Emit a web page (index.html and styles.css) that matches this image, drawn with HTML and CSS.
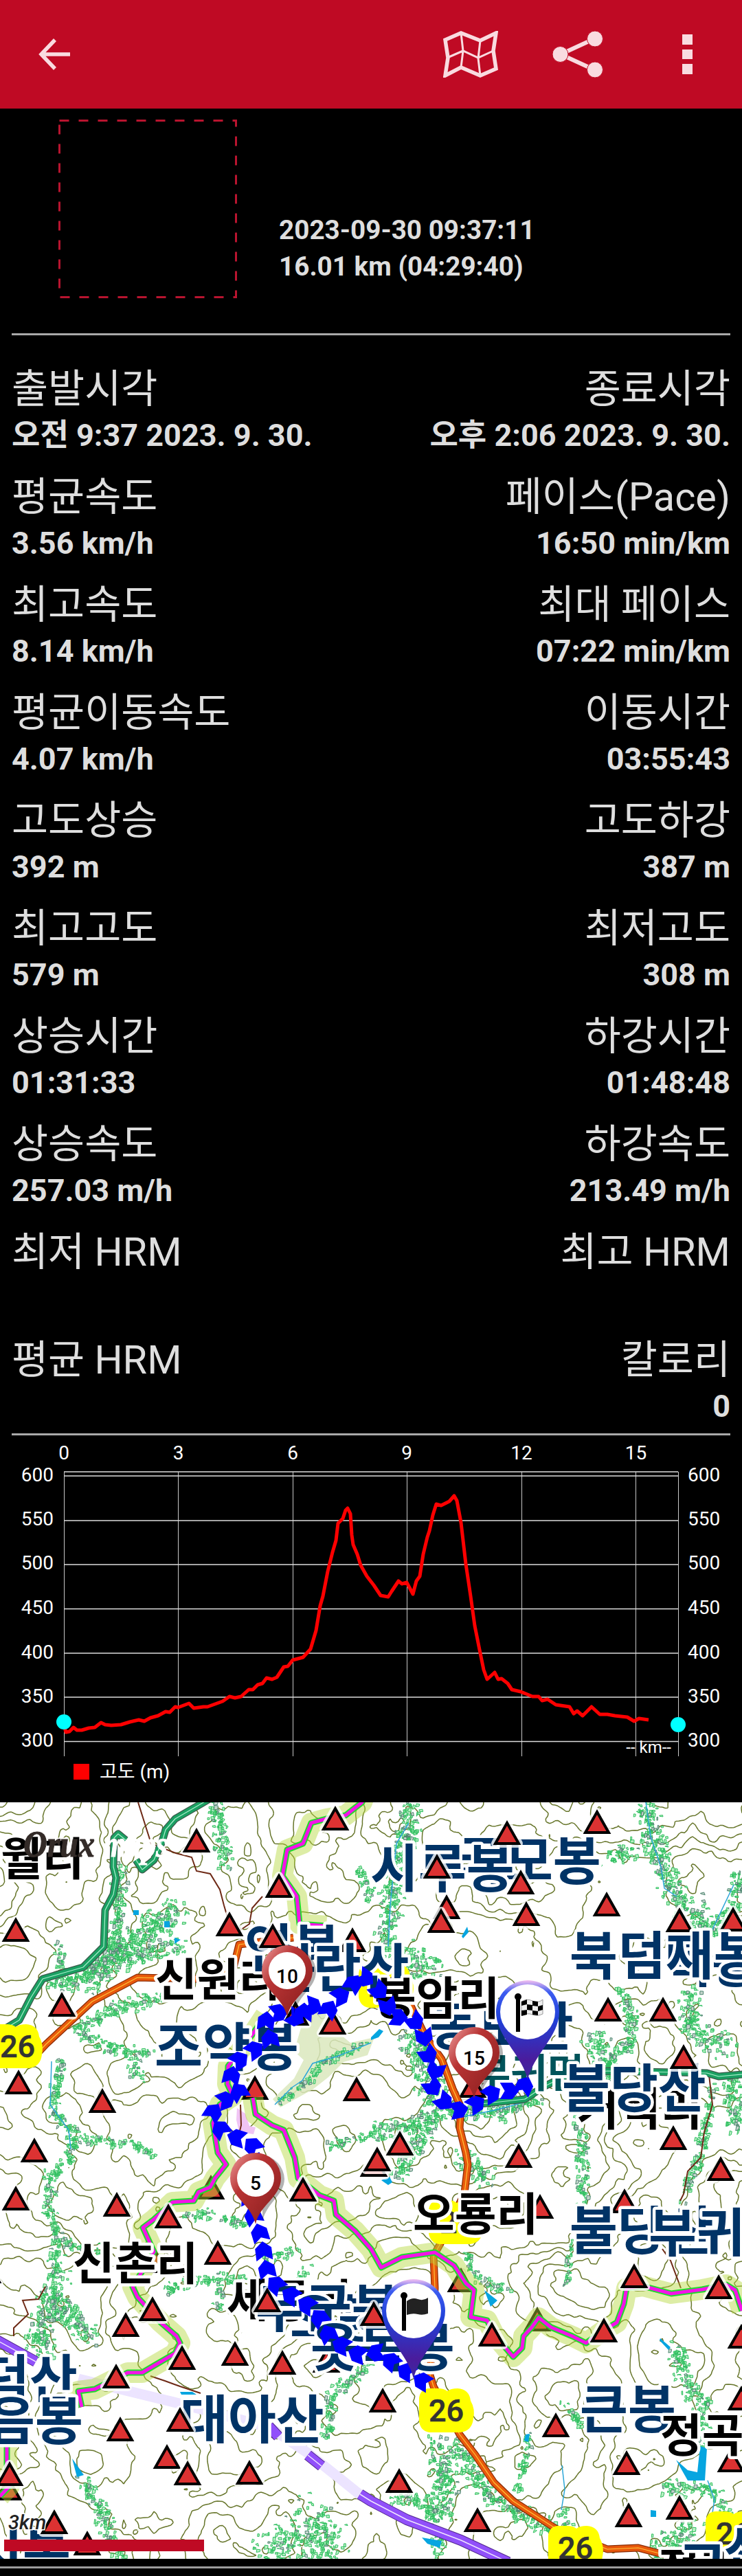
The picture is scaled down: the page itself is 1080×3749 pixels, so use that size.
FILE: index.html
```html
<!DOCTYPE html>
<html lang="ko">
<head>
    <meta charset="UTF-8">
    <meta name="viewport" content="width=device-width, initial-scale=1.0">
    <title>OruxMaps</title>
    <link rel="stylesheet" href="styles.css">
</head>
<body>
    <!-- Top bar -->
    <header class="toolbar">
        <svg class="icon back" viewBox="0 0 48 48"><path d="M46 24H5M24 3L4 24l20 21"/></svg>
        <svg class="icon map-icon" viewBox="0 0 80 68"><path class="thick" d="M3 13L26 3l28 11L77 3l-4 26 4 26-23 10-28-12L3 65l4-26z"/><path class="thin" d="M26 3l3 26-3 24M54 14l-3 26 3 25M6 39l23-10 22 10 22-10"/></svg>
        <svg class="icon share" viewBox="0 0 74 68"><path d="M12 34L62 11M12 34l50 23"/><circle cx="11.500" cy="34" r="11.500"/><circle cx="62" cy="11.500" r="11.500"/><circle cx="62" cy="56.500" r="11.500"/></svg>
        <div class="more"><i></i><i></i><i></i></div>
    </header>

    <!-- Track title -->
    <section class="summary">
        <svg class="photo" viewBox="0 0 260 260"><rect x="1.500" y="1.500" width="257" height="257"/></svg>
        <div class="summary-text">
            <div>2023-09-30 09:37:11</div>
            <div>16.01 km (04:29:40)</div>
        </div>
    </section>

    <!-- Statistics -->
    <section class="stats">
        <div class="stat"><label>출발시각</label><b>오전 9:37 2023. 9. 30.</b></div>
        <div class="stat"><label>종료시각</label><b>오후 2:06 2023. 9. 30.</b></div>
        <div class="stat"><label>평균속도</label><b>3.56 km/h</b></div>
        <div class="stat"><label>페이스(Pace)</label><b>16:50 min/km</b></div>
        <div class="stat"><label>최고속도</label><b>8.14 km/h</b></div>
        <div class="stat"><label>최대 페이스</label><b>07:22 min/km</b></div>
        <div class="stat"><label>평균이동속도</label><b>4.07 km/h</b></div>
        <div class="stat"><label>이동시간</label><b>03:55:43</b></div>
        <div class="stat"><label>고도상승</label><b>392 m</b></div>
        <div class="stat"><label>고도하강</label><b>387 m</b></div>
        <div class="stat"><label>최고고도</label><b>579 m</b></div>
        <div class="stat"><label>최저고도</label><b>308 m</b></div>
        <div class="stat"><label>상승시간</label><b>01:31:33</b></div>
        <div class="stat"><label>하강시간</label><b>01:48:48</b></div>
        <div class="stat"><label>상승속도</label><b>257.03 m/h</b></div>
        <div class="stat"><label>하강속도</label><b>213.49 m/h</b></div>
        <div class="stat"><label>최저 HRM</label><b></b></div>
        <div class="stat"><label>최고 HRM</label><b></b></div>
        <div class="stat"><label>평균 HRM</label><b></b></div>
        <div class="stat"><label>칼로리</label><b>0</b></div>
    </section>

    <!-- Altitude chart -->
    <svg class="chart" viewBox="0 0 1080 534">
        <path class="grid-v" d="M93.500 53V467M259.500 53V467M426.500 53V467M592.500 53V467M759.500 53V467M925.500 53V467M987.500 53V467"/>
        <path class="grid-h" d="M93 53H987M93 59H987M93 124H987M93 188H987M93 252.500H987M93 317H987M93 381H987M93 445.500H987"/>
        <g class="axis mid">
            <text x="93" y="35">0</text><text x="259.500" y="35">3</text><text x="426" y="35">6</text>
            <text x="592" y="35">9</text><text x="759" y="35">12</text><text x="925.500" y="35">15</text>
        </g>
        <g class="axis end">
            <text x="78" y="67">600</text><text x="78" y="131">550</text><text x="78" y="195">500</text><text x="78" y="260">450</text>
            <text x="78" y="325">400</text><text x="78" y="389">350</text><text x="78" y="453">300</text>
            <text class="unit" x="977" y="462">-- km--</text>
        </g>
        <g class="axis">
            <text x="1001" y="67">600</text><text x="1001" y="131">550</text><text x="1001" y="195">500</text><text x="1001" y="260">450</text>
            <text x="1001" y="325">400</text><text x="1001" y="389">350</text><text x="1001" y="453">300</text>
        </g>
        <polyline class="altitude" points="94,425 96,432 101,431 107,425 112,429 119,429 129,426 138,425 147,418 153,421 162,422 176,421 189,417 202,414 210,416 219,411 230,408 241,402 247,403 255,395 259,396 275,390 282,397 296,395 302,395 313,391 324,387 334,380 342,382 351,380 362,370 368,370 375,363 382,361 388,353 396,355 403,352 413,337 419,336 426,327 441,323 452,311 460,284 466,248 470,234 477,198 484,170 489,153 492,128 499,121 503,109 506,106 510,114 512,145 514,159 520,173 525,189 534,205 544,218 554,233 565,235 570,227 580,212 585,216 592,214 601,231 606,212 611,205 616,173 622,148 625,139 630,116 635,100 642,102 654,96 661,88 665,95 671,127 678,187 685,234 691,277 698,312 704,341 709,355 720,345 725,355 730,354 739,361 745,370 758,373 775,380 784,380 789,386 797,384 809,392 829,395 835,405 840,401 848,408 861,395 873,406 884,406 895,408 913,410 923,416 930,412 944,414"/>
        <circle class="handle" cx="93" cy="417" r="11"/>
        <circle class="handle" cx="987" cy="421" r="11"/>
        <rect class="legend" x="107" y="478" width="23" height="23"/>
        <text class="axis" x="145" y="499">고도 (m)</text>
    </svg>

    <!-- Map -->
    <svg class="map" viewBox="0 0 1080 1101">
        <defs>
            <path id="peak" d="M0 3L17 33H-17z"/>
            <path id="chevron" d="M0-14L12-4V14L0 7-12 14V-4z"/>
            <path id="badge" d="M0 14Q2 0 15 0H28Q36 0 41 4 46 0 56 0 73 1 75 18 82 30 79 44 77 62 60 64H15Q2 62 0 48z"/>
            <linearGradient id="redPin" x1="0" x2="1" y1="0" y2="1"><stop offset="0" stop-color="#f0a0a0"/><stop offset=".35" stop-color="#b83434"/><stop offset="1" stop-color="#861c1c"/></linearGradient>
            <linearGradient id="bluePin" x1="0" x2="0" y1="0" y2="1"><stop offset="0" stop-color="#f4c0f0"/><stop offset=".12" stop-color="#3c5cf0"/><stop offset=".4" stop-color="#2040d8"/><stop offset=".8" stop-color="#4a1c9c"/><stop offset="1" stop-color="#3c2aa0"/></linearGradient>
            <g id="kmPin"><path class="shadow" d="M6 3A37 37 0 0 1 38 38C38 62 12 72 6 100z" transform="translate(4 -37)"/><path fill="url(#redPin)" d="M0 67C-6 38-37 28-37 0a37 37 0 0 1 74 0C37 28 6 38 0 67z"/><circle r="27" fill="#fff"/></g>
            <g id="flagPin"><path fill="url(#bluePin)" d="M0 99C-8 62-46 36-46 0a46 46 0 0 1 92 0C46 36 8 62 0 99z"/><circle r="40" fill="#fff"/><circle cx="-14" cy="-22" r="5"/><path d="M-17-22h6v51h-6z"/></g>
        </defs>
        <g id="contours" class="contour"></g>
        <path class="park" d="M445 305L468 297 486 330 510 350 545 342 535 368 500 378 478 400 455 418 408 444 397 432 428 402 442 375 428 362z"/>
        <path class="pink" d="M345 445l12 8 6 18 9 2-3 10-21-3-4-18z"/>
        <g id="fields"></g>
        <g class="lake">
            <path d="M984 957L1001 987 1026 987 1029 940 1019 937 1015 975 1001 972z"/>
            <path d="M105 955L122 979 112 982zM705 710L724 725 714 734zM614 1070L643 1075 640 1085 622 1079z"/>
            <path d="M194 157h8v7h-8zM239 173h8v9h-8zM254 197l9 3-9 6zM672 195l8-14 2 8-8 9zM765 920l6-1-2 12-6-2zM555 550l12-5 4 8-6 4zM961 780l15 13-3 4-13-14zM947 1030l8 1v9h-8zM262 858l18 0 6 4-22 0zM540 342l12-12 6 3-7 9-11 4z"/>
        </g>
        <g class="stream">
            <path d="M940 0L947 50 962 94 967 125 985 137M1036 187L1068 120M663 460L720 448 765 436 780 420M565 210L568 150 577 60 595 30M75 377L73 440 100 477 103 505M818 965L822 1000 817 1030M1030 987L1040 1015 1036 1040M400 440L425 415 440 405 455 380 490 370 540 350"/>
        </g>
        <g class="trail">
            <path d="M201 0L212 35 220 60 256 74 279 80 286 100 306 104 320 127 326 150 334 177 344 190 363 177 367 154 382 137"/>
            <path d="M1032 397L1037 440 1025 480 1020 517 1001 537 995 570 990 580M964 650L976 667 991 707M66 705L56 723 33 725 41 745 20 765V777M219 835L240 842 262 850 292 860M350 440L351 470 345 495"/>
        </g>
        <g id="lowPeaks" class="peak"></g>

        <!-- Roads -->
        <path class="tunnel" d="M114 839L269 877 393 910 448 947 527 1010"/>
        <g class="road purple">
            <path d="M-10 780L52 814M391 908l14 15M448 950L468 966M524 1007L540 1017 592 1044 671 1074 740 1106"/>
            <path d="M-10 780L52 814M391 908l14 15M448 950L468 966M524 1007L540 1017 592 1044 671 1074 740 1106"/>
            <path d="M-10 780L52 814M448 950L468 966M524 1007L540 1017 592 1044 671 1074 740 1106"/>
        </g>
        <g class="road green">
            <path d="M310-8L293 2 255 24 241 40 236 57 224 84 207 98 198 84M183 55L172 46 166 52 165 94 169 110 165 134 153 157 151 210 121 240 62 257 45 284 28 317 5 331M690 440L764 432 791 414 826 397 884 391 1029 394 1046 399 1090 395"/>
            <path d="M310-8L293 2 255 24 241 40 236 57 224 84 207 98 198 84M183 55L172 46 166 52 165 94 169 110 165 134 153 157 151 210 121 240 62 257 45 284 28 317 5 331M690 440L764 432 791 414 826 397 884 391 1029 394 1046 399 1090 395"/>
            <path d="M310-8L293 2 255 24 241 40 236 57 224 84 207 98 198 84M183 55L172 46 166 52 165 94 169 110 165 134 153 157 151 210 121 240 62 257 45 284 28 317 5 331M690 440L764 432 791 414 826 397 884 391 1029 394 1046 399 1090 395"/>
        </g>
        <g class="road orange">
            <path d="M50 370L67 352 134 290 200 255 286 257 339 244 348 207 427 197M597 294L619 340 643 374 659 417 671 444 669 474 678 510 681 527 676 569 640 644 631 660 633 707 626 834 631 850 669 920 692 950 719 990 747 1017 809 1057 884 1087 929 1085 967 1095"/>
            <path d="M50 370L67 352 134 290 200 255 286 257 339 244 348 207 427 197M597 294L619 340 643 374 659 417 671 444 669 474 678 510 681 527 676 569 640 644 631 660 633 707 626 834 631 850 669 920 692 950 719 990 747 1017 809 1057 884 1087 929 1085 967 1095"/>
            <path d="M50 370L67 352 134 290 200 255 286 257 339 244 348 207 427 197M597 294L619 340 643 374 659 417 671 444 669 474 678 510 681 527 676 569 640 644 631 660 633 707 626 834 631 850 669 920 692 950 719 990 747 1017 809 1057 884 1087 929 1085 967 1095"/>
        </g>
        <g id="ridges" class="ridge"></g>

        <g class="badge">
            <use href="#badge" x="-18" y="323"/><text x="0" y="371">26</text>
            <use href="#badge" x="610" y="853"/><text x="624" y="901">26</text>
            <use href="#badge" x="798" y="1053"/><text x="812" y="1101">26</text>
            <use href="#badge" x="1027" y="1032"/><text x="1042" y="1080">26</text>
            <use href="#badge" x="624" y="579"/><text x="640" y="627">26</text>
            <use href="#badge" x="522" y="235"/><text x="536" y="283">26</text>
        </g>

        <!-- Place names -->
        <g class="place village">
            <text x="1" y="106">월리</text>
            <text x="226" y="282">신원리</text>
            <text x="545" y="309">봉암리</text>
            <text x="840" y="470">거석리</text>
            <text x="601" y="623">오룡리</text>
            <text x="106" y="695">신촌리</text>
            <text x="330" y="749">세동리</text>
            <text x="958" y="1140">정리</text>
        </g>
        <g class="place">
            <text class="town" x="690" y="415">부귀면</text>
            <text x="665" y="113">국모봉</text>
            <text x="539" y="124">시루봉</text>
            <text x="966" y="262">덕봉</text>
            <text x="829" y="251">북덤재봉</text>
            <text x="356" y="240">연봉</text>
            <text x="386" y="269">월란산</text>
            <text x="225" y="384">조약봉</text>
            <text x="625" y="354">동보산</text>
            <text x="818" y="444">불당산</text>
            <text x="829" y="651">불당산</text>
            <text x="944" y="654">부귀산</text>
            <text x="422" y="778">오봉</text>
            <text x="372" y="764">두군봉</text>
            <text x="452" y="821">옷목봉</text>
            <text x="-27" y="867">덕산</text>
            <text x="-19" y="928">음봉</text>
            <text x="262" y="926">대아산</text>
            <text x="844" y="911">큰봉</text>
            <text x="-37" y="1121">시봉</text>
            <text x="987" y="1138">고산</text>
            <text x="1054" y="1116">산</text>
        </g>
        <g class="place village">
            <text x="545" y="309">봉암리</text>
            <text x="961" y="945">정곡리</text>
        </g>
        <g id="peaks" class="peak"></g>
        <g id="track" class="track"></g>

        <!-- Pins -->
        <use href="#kmPin" x="418" y="245"/><text class="km" x="418" y="263">10</text>
        <use href="#kmPin" x="690" y="364"/><text class="km" x="690" y="382">15</text>
        <use href="#kmPin" x="372" y="547"/><text class="km" x="372" y="564">5</text>
        <use href="#flagPin" x="768" y="305"/>
        <path class="checker-frame" d="M759 290q8-5 16-1t15-2v21q-8 4-15 1t-16 1z"/>
        <path d="M759 290l8-3v7l-8 2zM775 289l8 1v7l-8-1zM767 294l8 1v8l-8-1zM783 297l7-2v7l-7 2zM759 303l8-1v7l-8 2zM775 303l8 1v6l-8-1z"/>
        <use href="#flagPin" x="602" y="740"/>
        <path class="flag" d="M592 726q8-6 16-3t15-2v23q-8 3-15 1t-16 1z"/>

        <text class="logo" x="34" y="79" textLength="104" lengthAdjust="spacingAndGlyphs">Orux</text>
        <text class="logo light" x="150" y="79" textLength="94" lengthAdjust="spacingAndGlyphs">maps</text>
        <text class="scale-text" x="12" y="1058">3km</text>
        <rect class="scale-bar" x="6" y="1073" width="291" height="17"/>
    </svg>
    <footer class="bottom-line"></footer>

    <script src="map.js"></script>
</body>
</html>
```
FILE: styles.css
```css
body {
    margin: 0;
    background-color: #000;
    color: #dedede;
    font-family: Roboto, "Noto Sans CJK KR", sans-serif;
}

svg {
    display: block;
}

/* Top bar */
.toolbar {
    box-sizing: border-box;
    height: 158px;
    padding: 0 72px 0 56px;
    display: flex;
    align-items: center;
    background-color: #bf0a24;
}

.icon {
    fill: none;
    stroke: #f9dbe0;
}

.back {
    width: 48px;
    height: 48px;
    stroke-width: 5.5;
    margin-right: auto;
}

.map-icon {
    width: 80px;
    height: 68px;
    margin-right: 79px;
}

.thick {
    stroke-width: 5.5;
}

.thin {
    stroke-width: 3;
}

.share {
    width: 74px;
    height: 68px;
    stroke-width: 6;
    margin-right: 115px;
}

.share circle {
    fill: #f9dbe0;
    stroke: #bf0a24;
    stroke-width: 1;
}

.more {
    display: grid;
    gap: 7px;
}

.more i {
    width: 15px;
    height: 14.500px;
    background-color: #f9dbe0;
}

/* Track title */
.summary {
    box-sizing: border-box;
    height: 330px;
    margin: 0 17px;
    padding: 16px 0 0 68px;
    display: flex;
    border-bottom: 3px solid #a9a9a9;
}

.photo {
    width: 260px;
    height: 260px;
    fill: none;
    stroke: #b8142f;
    stroke-width: 3;
    stroke-dasharray: 14 14;
}

.summary-text {
    padding: 134px 0 0 61px;
    font-size: 38.7px;
    font-weight: 700;
    line-height: 53px;
}

/* Statistics */
.stats {
    box-sizing: border-box;
    height: 1601px;
    margin: 0 17px;
    padding-top: 36px;
    display: grid;
    grid-template-columns: 1fr 1fr;
    grid-auto-rows: 157px;
    border-bottom: 3px solid #a9a9a9;
}

.stat {
    display: flex;
    flex-direction: column;
    white-space: nowrap;
}

.stat:nth-child(even) {
    align-items: flex-end;
}

.stat label {
    font-size: 57.7px;
    line-height: 84px;
}

.stat b {
    font-size: 45px;
    line-height: 52px;
}

/* Altitude chart */
.chart {
    width: 1080px;
    height: 534px;
}

.grid-h {
    stroke: #dcdcdc;
    stroke-width: 1.5;
}

.grid-v {
    stroke: #c8c8c8;
    stroke-width: 1;
}

.axis {
    fill: #fff;
    font-size: 28px;
}

.mid {
    text-anchor: middle;
}

.end {
    text-anchor: end;
}

.unit {
    font-size: 24px;
}

.altitude {
    fill: none;
    stroke: #f00;
    stroke-width: 5;
    stroke-linejoin: round;
}

.handle {
    fill: #0ff;
}

.legend {
    fill: #f00;
}

/* Map */
.map {
    width: 1080px;
    height: 1101px;
    background-color: #fff;
    overflow: hidden;
}

.contour {
    fill: none;
    stroke: #66752a;
    stroke-width: 1.5;
}

.park {
    fill: #dbe8bd;
    fill-opacity: .85;
}

.pink {
    fill: #f0c4f4;
}

.field {
    fill: #b9efc3;
    stroke: #2fc060;
    stroke-width: 1;
}

.field.grey {
    fill: #c3d4cb;
    stroke: #4d8570;
}

.lake {
    fill: #06a5e0;
}

.stream {
    fill: none;
    stroke: #2ba6d8;
    stroke-width: 1.5;
}

.trail {
    fill: none;
    stroke: #6e2a16;
    stroke-width: 2;
}

.road {
    fill: none;
    stroke-linejoin: round;
}

.road path:nth-child(1) {
    stroke-width: 11;
}

.road path:nth-child(2) {
    stroke-width: 8.5;
}

.road path:nth-child(3) {
    stroke-width: 1.2;
}

.green path:nth-child(1) {
    stroke: #3b5a4b;
}

.green path:nth-child(2) {
    stroke: #1aa062;
}

.green path:nth-child(3) {
    stroke: #a8f0cc;
}

.orange path:nth-child(1) {
    stroke: #8a2c08;
}

.orange path:nth-child(2) {
    stroke: #e8590c;
}

.orange path:nth-child(3) {
    stroke: #ffc43a;
}

.purple path:nth-child(1) {
    stroke: #52288f;
    stroke-width: 16;
}

.purple path:nth-child(2) {
    stroke: #9150fa;
    stroke-width: 14;
}

.purple path:nth-child(3) {
    stroke: #efe4ff;
    stroke-width: 1.5;
}

.tunnel {
    fill: none;
    stroke: #ece4ff;
    stroke-width: 15;
}

.ridge {
    fill: none;
    stroke-linejoin: round;
}

.ridge .halo {
    stroke: #b4d63a;
    stroke-opacity: .45;
    stroke-width: 30;
}

.ridge .edge {
    stroke: #1fdc2c;
    stroke-width: 9;
}

.ridge .core {
    stroke: #f413e8;
    stroke-width: 5;
}

.peak {
    fill: #dc3232;
    stroke: #000;
    stroke-width: 4;
}

.peak .ring {
    fill: #fff;
    stroke: #fff;
    stroke-opacity: .8;
    stroke-width: 12;
    stroke-linejoin: round;
}

.badge {
    fill: #ff0;
    font-size: 45px;
    font-weight: 500;
}

.badge text {
    fill: #333;
    stroke: #333;
    stroke-width: .6;
}

.place {
    fill: #003366;
    stroke: #fff;
    stroke-width: 9;
    stroke-linejoin: round;
    paint-order: stroke;
    font-family: "Noto Sans CJK KR", sans-serif;
    font-size: 76px;
    font-weight: 700;
}

.village {
    fill: #000;
    font-size: 66px;
}

.town {
    fill: #00535a;
    font-size: 58px;
}

.track {
    fill: #00f;
}

.shadow {
    fill: #000;
    opacity: .3;
}

.km {
    font-size: 28px;
    font-weight: 500;
    text-anchor: middle;
}

.checker-frame {
    fill: #eee;
    stroke: #999;
}

.flag {
    fill: #222;
}

.logo {
    fill: #332b28;
    stroke: #332b28;
    stroke-width: 1;
    font: italic 700 54px "Liberation Serif", serif;
}

.logo.light {
    fill: #fff;
    stroke: #fff;
}

.scale-text {
    fill: #222;
    stroke: #fff;
    stroke-width: 3;
    paint-order: stroke;
    font-size: 29px;
    font-style: italic;
    font-weight: 500;
}

.scale-bar {
    fill: #bf0a24;
}

.bottom-line {
    height: 11px;
    padding-bottom: 11px;
    box-sizing: content-box;
    background: linear-gradient(#9c9c9c, #9c9c9c) 0 11px / 100% 3px no-repeat;
}
```
FILE: map.js
```js
const NS = 'http://www.w3.org/2000/svg';

function add(parent, tag, attrs) {
    const el = document.createElementNS(NS, tag);
    for (const key in attrs) el.setAttribute(key, attrs[key]);
    document.getElementById(parent).appendChild(el);
    return el;
}

let seed = 26;
function rnd() {
    seed = (seed * 16807) % 2147483647;
    return seed / 2147483647;
}

// Height field for the contour lines
function hash(x, y) {
    const n = Math.sin(x * 127.1 + y * 311.7) * 43758.5453;
    return n - Math.floor(n);
}

function noise(x, y) {
    const xi = Math.floor(x), yi = Math.floor(y);
    let u = x - xi, v = y - yi;
    u = u * u * (3 - 2 * u);
    v = v * v * (3 - 2 * v);
    return (hash(xi, yi) * (1 - u) + hash(xi + 1, yi) * u) * (1 - v) +
        (hash(xi, yi + 1) * (1 - u) + hash(xi + 1, yi + 1) * u) * v;
}

function height(x, y) {
    const wx = x + noise(x / 14, y / 14) * 16, wy = y + noise(x / 14 + 40, y / 14) * 16;
    return noise(wx / 120, wy / 120) * 5.5 + noise(wx / 46 + 9, wy / 46) * 2.4 +
        noise(x / 9, y / 9) * 0.35;
}

function drawContours() {
    const s = 4;
    let d = '';
    for (let y = 0; y < 1101; y += s) {
        for (let x = 0; x < 1080; x += s) {
            const c = [[x, y], [x + s, y], [x + s, y + s], [x, y + s]];
            const h = c.map(p => height(p[0], p[1]));
            for (let level = Math.ceil(Math.min(...h)); level < Math.max(...h); level++) {
                const cut = [];
                for (let i = 0; i < 4; i++) {
                    const j = (i + 1) % 4;
                    if ((h[i] < level) !== (h[j] < level)) {
                        const t = (level - h[i]) / (h[j] - h[i]);
                        cut.push((c[i][0] + (c[j][0] - c[i][0]) * t).toFixed(1) + ' ' + (c[i][1] + (c[j][1] - c[i][1]) * t).toFixed(1));
                    }
                }
                if (cut.length > 1) d += 'M' + cut[0] + 'L' + cut[1];
            }
        }
    }
    add('contours', 'path', { d: d });
}

// Farmland in the valleys: [width, x, y, x, y, ...]
const valleys = [
    [16, 310, 0, 318, 40, 324, 87], [14, 172, 90, 172, 157, 163, 217, 117, 257, 69, 262],
    [26, 255, 155, 220, 180, 179, 204, 151, 232, 130, 262], [16, 262, 204, 193, 222, 151, 235],
    [12, 241, 280, 162, 300, 114, 327, 138, 350, 217, 370], [10, 85, 205, 90, 245, 105, 262],
    [12, 89, 377, 74, 444, 103, 477, 103, 510, 72, 544, 69, 594, 83, 637, 76, 697],
    [28, 76, 697, 75, 740, 50, 775], [20, 80, 720, 105, 755, 135, 777], [8, 107, 487, 186, 494, 227, 514],
    [9, 265, 604, 300, 597, 358, 614], [10, 241, 707, 310, 690, 362, 697], [8, 320, 695, 315, 735], [10, 90, 640, 140, 650],
    [20, 598, 0, 592, 44, 571, 110, 564, 177, 561, 217], [18, 600, 210, 606, 250, 630, 235],
    [22, 939, 0, 946, 44, 963, 94, 984, 134, 1036, 187], [14, 1036, 187, 1060, 160, 1080, 100],
    [12, 898, 264, 919, 310, 915, 350, 877, 375], [20, 860, 340, 890, 390, 840, 400], [20, 1001, 270, 1005, 330, 1056, 354],
    [16, 540, 480, 609, 467, 660, 444, 720, 450, 780, 430], [26, 595, 340, 620, 380, 630, 440], [18, 619, 467, 600, 505, 574, 537],
    [11, 840, 457, 846, 527, 845, 580], [18, 674, 510, 690, 540, 712, 544], [10, 1036, 407, 1019, 504, 991, 577],
    [10, 678, 654, 691, 690, 736, 707], [7, 831, 634, 824, 704], [20, 1060, 400, 1075, 470], [10, 480, 495, 540, 485],
    [16, 981, 790, 998, 844, 1022, 877, 1022, 937], [16, 664, 925, 685, 977, 712, 1010, 802, 1057],
    [8, 767, 917, 762, 960, 750, 997], [24, 640, 930, 648, 990, 640, 1040], [12, 964, 994, 1036, 1000, 1060, 1040],
    [30, 1000, 1060, 960, 1085], [14, 120, 984, 145, 1027, 165, 1077, 179, 1100], [11, 537, 820, 482, 860, 475, 924],
    [40, 458, 1037, 475, 1090], [30, 430, 1067, 389, 1087], [22, 52, 777, 66, 797], [9, 405, 435, 445, 405, 470, 375, 530, 350], [12, 190, 377, 205, 405],
    [8, 855, 915, 820, 875], [12, 570, 1010, 620, 1015, 640, 1090], [10, 815, 1030, 830, 1060], [10, 520, 90, 540, 140],
    [9, 430, 650, 385, 660], [7, 450, 670, 430, 700], [18, 885, 80, 920, 66]
];

function drawFields() {
    let green = '', grey = '';
    valleys.forEach(v => {
        for (let i = 1; i < v.length - 3; i += 2) {
            const dx = v[i + 2] - v[i], dy = v[i + 3] - v[i + 1];
            const count = Math.hypot(dx, dy) * v[0] / 15;
            for (let k = 0; k < count; k++) {
                const t = rnd();
                const x = v[i] + dx * t + (rnd() + rnd() - 1) * v[0];
                const y = v[i + 1] + dy * t + (rnd() + rnd() - 1) * v[0];
                const a = 1.5 + rnd() * 4, b = 1.5 + rnd() * 4, r = rnd() * 3 - 1.5;
                const d = `M${x.toFixed(1)} ${y.toFixed(1)}l${a.toFixed(1)} ${r.toFixed(1)} ${(-r).toFixed(1)} ${b.toFixed(1)} ${(-a).toFixed(1)} ${r.toFixed(1)}z`;
                if (rnd() < 0.14) grey += d; else green += d;
            }
        }
    });
    add('fields', 'path', { d: green, class: 'field' });
    add('fields', 'path', { d: grey, class: 'field grey' });
}

// Mountain ridges
const ridges = [
    'M530-8L527 0 503 19 475 24 453 30 441 60 418 69 411 107 432 137 436 177 475 180',
    'M386 310L368 337 332 384 331 410 339 427 320 440 310 467 317 510 329 527 313 547 306 560 289 567 282 580 251 582 224 607 208 619 224 654 203 689 193 705 200 720 234 757 257 777 262 787 255 802 224 820 207 830 186 830 138 854 114 857 119 880',
    'M10 930L10 964 14 995 0 1010',
    'M368 430L372 454 396 470 413 477 429 517 434 547 465 572 486 580 489 600 517 624 540 650 555 677 585 662 633 655 661 674 678 700 690 710 685 749 709 754 719 774 747 807 760 794 762 777 774 764 784 750 802 764 833 777 853 787 881 767 898 757 908 730 912 707 936 704 977 715 1022 709 1057 702 1070 710 1080 740'
];
ridges.forEach(d => add('ridges', 'path', { d: d, class: 'halo' }));
ridges.forEach(d => add('ridges', 'path', { d: d, class: 'edge' }));
ridges.forEach(d => add('ridges', 'path', { d: d, class: 'core' }));

// Peaks: x, y of the top corner
const lowPeaks = [[334, 160], [307, 543], [226, 650], [671, 678], [782, 735], [12, 981], [475, 795], [430, 290],
    [544, 510], [786, 571], [909, 563], [688, 395], [371, 398], [513, 183], [484, 303], [1064, 940], [127, 1061], [989, 154], [1067, 153]];
const peaks = [[488, 6], [286, 38], [406, 104], [23, 168], [397, 177], [90, 277], [738, 27], [869, 11], [636, 76],
    [758, 99], [766, 145], [650, 135], [642, 155], [883, 131], [885, 284], [965, 284], [995, 353], [27, 390], [149, 417],
    [50, 489], [23, 559], [170, 568], [245, 585], [519, 400], [441, 546], [317, 638], [389, 707], [222, 720], [183, 743],
    [582, 479], [549, 502], [755, 497], [980, 471], [1049, 516], [923, 672], [1046, 688], [879, 751], [716, 757], [544, 727],
    [1079, 760], [265, 791], [342, 785], [411, 798], [169, 818], [175, 895], [262, 881], [243, 935], [273, 959], [363, 958],
    [14, 960], [79, 1030], [557, 853], [581, 970], [695, 1027], [809, 889], [912, 944], [915, 1020], [989, 1009], [1079, 850], [-18, 665]];

function drawPeaks(id, list) {
    list.forEach(p => {
        add(id, 'use', { href: '#peak', x: p[0], y: p[1], class: 'ring' });
        add(id, 'use', { href: '#peak', x: p[0], y: p[1] });
    });
}

// Recorded track, one chevron each 27px
function drawTrack() {
    const line = document.createElementNS(NS, 'path');
    line.setAttribute('d', 'M614 842L574 818 554 800 540 803 517 803 496 790 482 784 472 760 455 737 434 724 410 710 391 692 385 664 382 640 374 614 363 590 366 550 377 510 362 494 331 484 317 472 310 449 327 434 350 425 336 402 341 380 365 364 393 344 386 312 413 304 441 320 443 292 477 305 486 287 506 277 523 250 540 262 561 284 568 312 600 314 616 334 621 364 636 385 626 409 640 430 661 449 685 444 722 420 760 420 769 400');
    const total = line.getTotalLength();
    for (let s = 0; s < total; s += 27) {
        const p = line.getPointAtLength(s), q = line.getPointAtLength(s + 8);
        const angle = Math.atan2(q.y - p.y, q.x - p.x) * 180 / Math.PI + 90;
        add('track', 'use', { href: '#chevron', transform: `translate(${p.x} ${p.y}) rotate(${angle})` });
    }
}

drawContours();
drawFields();
drawPeaks('lowPeaks', lowPeaks);
drawPeaks('peaks', peaks);
drawTrack();
```
